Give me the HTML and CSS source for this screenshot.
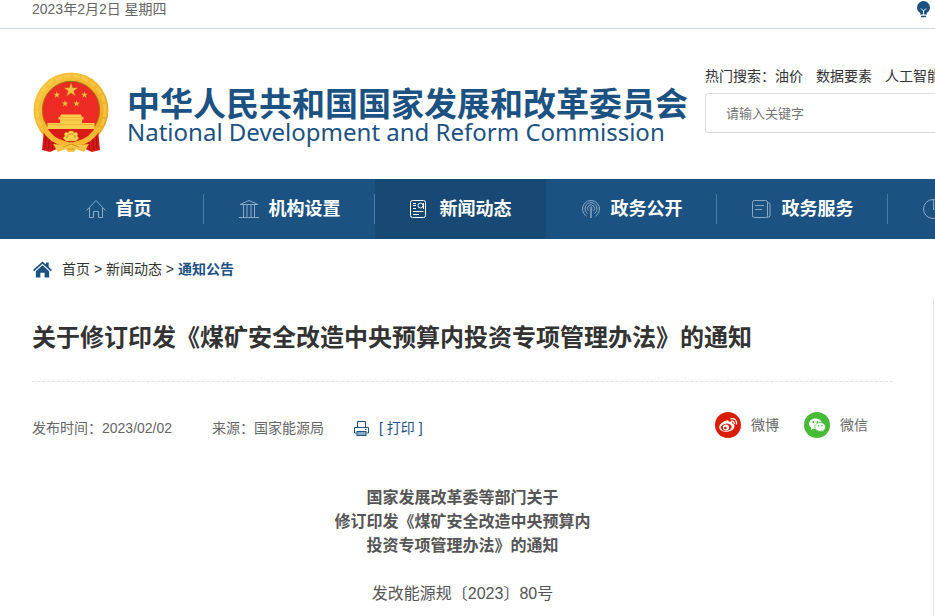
FILE: index.html
```html
<!DOCTYPE html>
<html lang="zh-CN">
<head>
  <meta charset="UTF-8">
  <meta name="viewport" content="width=device-width, initial-scale=1.0">
  <title>关于修订印发《煤矿安全改造中央预算内投资专项管理办法》的通知</title>
  <link rel="stylesheet" href="styles.css">
</head>
<body>
  <!-- Top bar -->
  <div class="topbar">
    <span>2023年2月2日 星期四</span>
    <a class="topbar-link" href="#" aria-label="智能问答">
      <svg width="13" height="17" viewBox="0 0 13 17">
        <path d="M6.500 0a6.500 6.500 0 0 0-6.500 6.500c0 2.500 1.300 4.300 3.300 5.500v2h6.400v-2c2-1.200 3.300-3 3.300-5.500a6.500 6.500 0 0 0-6.500-6.500z" fill="#1c5282"/>
        <path d="M4 7.500 6.500 10 9 7.500M6.500 10v4M3.500 14h6" fill="none" stroke="#fff"/>
        <path d="M4 15.500h5" stroke="#1c5282" stroke-width="1.500"/>
      </svg>
    </a>
  </div>

  <!-- Header -->
  <header class="header">
    <a class="brand" href="#">
      <svg class="emblem" width="76" height="82" viewBox="0 0 76 82">
        <defs>
          <linearGradient id="gold" x1="0" y1="0" x2="1" y2="1">
            <stop offset="0" stop-color="#f9c845"/>
            <stop offset="0.5" stop-color="#f2b52c"/>
            <stop offset="1" stop-color="#e9a41f"/>
          </linearGradient>
        </defs>
        <circle cx="38" cy="38" r="37.500" fill="url(#gold)"/>
        <circle cx="38" cy="38" r="34" fill="none" stroke="#fad052" stroke-width="3" stroke-dasharray="7 2" opacity=".6"/>
        <circle cx="38" cy="38" r="28.700" fill="#ed2a24" stroke="#a87412" stroke-width="1"/>
        <g fill="#f6c142" stroke="#a8620f" stroke-width="0.400">
          <path id="star" d="M38 10.500l1.700 5.200h5.500l-4.400 3.200 1.700 5.300-4.500-3.300-4.500 3.300 1.700-5.300-4.400-3.200h5.500z"/>
          <use href="#star" transform="translate(5.600 14.300) scale(.48)"/>
          <use href="#star" transform="translate(33.200 14.300) scale(.48)"/>
          <use href="#star" transform="translate(13.800 22.900) scale(.48)"/>
          <use href="#star" transform="translate(25.300 22.900) scale(.48)"/>
        </g>
        <path d="M28 42.500h20l1 2.500h1.500v2.500H49V51h12.500v6h-47v-6H27v-3.500h-1.500V45H27z" fill="#f9ce4c"/>
        <path d="M27 45.500h22M28 48h20M15 52.500h46" stroke="#eaa42a" stroke-width="0.600"/>
        <path d="M11 57h54l2 21-8 2-9-4H26l-9 4-8-2z" fill="#d91a17"/>
        <path d="M13 61l-1 16M17 64l-2 14M63 61l1 16M59 64l2 14M21 68l-2 10M55 68l2 10" stroke="#a90f11" stroke-width="1.200"/>
        <path d="M13 54q6 12 19 15l6 2 6-2q13-3 19-15l4 4q-7 13-22 16l-7-2-7 2Q16 71 9 58z" fill="#f4b931"/>
        <path d="M31 62l2-2 2 1 1-2h4l1 2 2-1 2 2-1 2 2 2-3 3H33l-3-3 2-2z" fill="#fbd24d" stroke="#c88718" stroke-width="0.500"/>
        <path d="M34 66a4 4 0 0 1 8 0" fill="none" stroke="#d9941d" stroke-width="1.200"/>
        <path d="M20 72l12 1 6-3 6 3 12-1-5 8-8-3-2 3h-6l-2-3-8 3z" fill="#f6c544"/>
        <path d="M30 75l8-3 8 3M34 77h8" fill="none" stroke="#d4901c" stroke-width="0.900"/>
      </svg>
      <span class="brand-text">
        <span class="brand-cn">中华人民共和国国家发展和改革委员会</span>
        <span class="brand-en">National Development and Reform Commission</span>
      </span>
    </a>
    <form class="search">
      <div class="hot">
        <label for="keyword">热门搜索：</label>
        <a href="#">油价</a>
        <a href="#">数据要素</a>
        <a href="#">人工智能</a>
      </div>
      <input type="text" id="keyword" placeholder="请输入关键字">
    </form>
  </header>

  <!-- Main navigation -->
  <nav class="nav">
    <a class="nav-item" href="#">
      <svg width="20" height="20" viewBox="0 0 20 20"><path d="M.5 11.500 10 1.500l9.500 10M3.500 9v9.500h4v-6h5v6h4V9"/></svg>
      首页
    </a>
    <a class="nav-item" href="#">
      <svg width="20" height="20" viewBox="0 0 20 20"><path d="M1 5.500 10 1.500l9 4zM0 18.500h20M4.500 6v12M8 6v12M12 6v12M15.500 6v12"/></svg>
      机构设置
    </a>
    <a class="nav-item active" href="#">
      <svg width="20" height="20" viewBox="0 0 20 20"><rect x=".5" y="1.500" width="15" height="17" rx="2"/><circle cx="10.500" cy="6.500" r="2.500"/><path d="M3 4.500h3M3 6.500h3M3 9.500h3M13.500 4v6M3 12.500h10.500M3 15.500h6"/></svg>
      新闻动态
    </a>
    <a class="nav-item" href="#">
      <svg width="20" height="20" viewBox="0 0 20 20"><path d="M5.500 17.200a8.500 8.500 0 1 1 9 0M6.500 14.500a6 6 0 1 1 7 0M7.500 11.800a3.500 3.500 0 1 1 5 0"/><circle cx="10" cy="9" r="1"/><path d="M10 10v9" stroke-width="1.500"/></svg>
      政务公开
    </a>
    <a class="nav-item" href="#">
      <svg width="20" height="20" viewBox="0 0 20 20"><rect x=".5" y="1.500" width="15" height="17" rx="2"/><path d="M3 6.500h9M3 10.500h7M15.500 3.500q2.500 0 2.500 2v11q0 2-3 2"/></svg>
      政务服务
    </a>
    <a class="nav-item" href="#">
      <svg width="20" height="20" viewBox="0 0 20 20"><circle cx="10" cy="10" r="9.500"/><path d="M10.500 1v9.500h8"/></svg>
      发改数据
    </a>
  </nav>

  <!-- Breadcrumb -->
  <div class="crumbs">
    <svg width="19" height="17" viewBox="0 0 20 17" fill="#1c5282">
      <path d="M10 0 0 9l1.300 1.300L10 2.500l8.700 7.800L20 9l-3.500-3.200V1h-3v2.200z"/>
      <path d="M10 4 3 10.300V17h4.800v-5h4.400v5H17v-6.700z"/>
    </svg>
    <span><a href="#">首页</a> &gt; <a href="#">新闻动态</a> &gt; <a class="current" href="#">通知公告</a></span>
  </div>

  <!-- Article -->
  <main class="main">
    <article class="article">
      <h1>关于修订印发《煤矿安全改造中央预算内投资专项管理办法》的通知</h1>
      <div class="meta">
        <span>发布时间：2023/02/02</span>
        <span class="source">来源：国家能源局</span>
        <button type="button" class="print">
          <svg width="15" height="15" viewBox="0 0 15 15">
            <path d="M3.500 6V.5h8V6M2.500 12H.5V6.500h14V12h-2" fill="none" stroke="#1c5282"/>
            <rect x="3" y="10.500" width="9" height="4" fill="#8da9c0" stroke="#1c5282"/>
            <path d="M11 8.500h1.500" stroke="#1c5282"/>
          </svg>
          [ 打印 ]
        </button>
        <div class="share">
          <a href="#">
            <svg width="26" height="26" viewBox="0 0 26 26">
              <circle cx="13" cy="13" r="13" fill="#d81e06"/>
              <path d="M11.500 8.500c1.500-.8 2.600-.3 2.200 1.500 2.300-.8 4-.4 3.500 1.400 1.500.5 2.300 1.400 2.300 2.600 0 3-3.500 5.800-8 5.800-4.300 0-7.300-2-7.300-4.600 0-2.500 3.500-5.700 7.300-6.700z" fill="#fff"/>
              <ellipse cx="11.300" cy="15.300" rx="5.400" ry="3.700" transform="rotate(-8 11.300 15.300)" fill="#d81e06"/>
              <circle cx="11" cy="15.500" r="3.100" fill="#fff"/>
              <circle cx="10.300" cy="16" r="1.300" fill="#d81e06"/>
              <path d="M16 6.800c3.500-.8 6.300 1.900 5.400 5.200M16.500 9.200c1.800-.3 3 .9 2.600 2.500" fill="none" stroke="#fff" stroke-width="1.300" stroke-linecap="round"/>
            </svg>
            微博
          </a>
          <a href="#">
            <svg width="26" height="26" viewBox="0 0 26 26">
              <circle cx="13" cy="13" r="13" fill="#45bb36"/>
              <path d="M11.500 6.500c-3.700 0-6.500 2.300-6.500 5.300 0 1.700.9 3.100 2.400 4.100l-.6 2 2.300-1.200 2.400.4c3.700 0 6.500-2.400 6.500-5.300s-2.800-5.300-6.500-5.300z" fill="#fff"/>
              <path d="M16.200 10.600c-3 0-5.400 1.900-5.400 4.400s2.400 4.400 5.400 4.400l1.900-.3 1.900 1-.5-1.700c1.300-.8 2-2 2-3.400 0-2.500-2.300-4.400-5.300-4.400z" fill="#fff" stroke="#45bb36" stroke-width="0.700"/>
              <g fill="#45bb36"><circle cx="9.300" cy="10" r=".9"/><circle cx="13.300" cy="10" r=".9"/><circle cx="14.500" cy="13.800" r=".8"/><circle cx="18" cy="13.800" r=".8"/></g>
            </svg>
            微信
          </a>
        </div>
      </div>
      <div class="content">
        <p><strong>国家发展改革委等部门关于<br>修订印发《煤矿安全改造中央预算内<br>投资专项管理办法》的通知</strong></p>
        <p>发改能源规〔2023〕80号</p>
      </div>
    </article>
    <aside class="sidebar"></aside>
  </main>
</body>
</html>
```
FILE: styles.css
```css
* {
  margin: 0;
  padding: 0;
  box-sizing: border-box;
}

body {
  font-family: "Liberation Sans", "Noto Sans CJK SC", sans-serif;
  font-size: 14px;
  line-height: 20px;
  color: #333;
  background: #fff;
  overflow: hidden auto;
  scrollbar-width: none;
}

a {
  color: inherit;
  text-decoration: none;
}

svg {
  flex: none;
}

/* Top bar */
.topbar {
  display: flex;
  justify-content: space-between;
  padding: 0 5px 9px 32px;
  line-height: 19px;
  color: #666;
  border-bottom: 1px solid #cfdce8;
}

.topbar-link {
  display: flex;
  padding-top: 1px;
}

/* Header */
.header {
  display: flex;
  height: 150px;
  padding-left: 33px;
}

.brand {
  display: flex;
  align-items: flex-start;
  gap: 18px;
  padding-top: 43px;
  color: #1c5282;
  white-space: nowrap;
}

.brand-text {
  display: flex;
  flex-direction: column;
  padding-top: 16px;
}

.brand-cn {
  font-size: 33px;
  line-height: 34px;
  font-weight: bold;
}

.brand-en {
  font-family: "Noto Sans", sans-serif;
  font-size: 24px;
  line-height: 20px;
}

.search {
  flex: 1;
  min-width: 230px;
  margin-left: 17px;
  padding-top: 37px;
}

.hot {
  display: flex;
  white-space: nowrap;
}

.hot a {
  margin-right: 13px;
}

.search input {
  width: 100%;
  height: 40px;
  margin-top: 7px;
  padding: 0 20px;
  border: 1px solid #ddd;
  border-right: none;
  border-radius: 4px 0 0 4px;
  font-family: inherit;
  font-size: 13px;
}

.search input::placeholder {
  color: #757575;
}

/* Navigation */
.nav {
  display: flex;
  height: 60px;
  padding-left: 33px;
  background: #1c5282;
  overflow: hidden;
}

.nav-item {
  flex: 0 0 171px;
  display: flex;
  justify-content: center;
  align-items: center;
  gap: 10px;
  font-size: 18px;
  font-weight: bold;
  color: #fff;
  white-space: nowrap;
  background: linear-gradient(#4d7aa2, #4d7aa2) right center / 1px 30px no-repeat;
}

.nav-item svg {
  fill: none;
  stroke: #8ba9c4;
}

.nav-item.active {
  background: #174974;
}

.nav-item.active svg {
  stroke: #fff;
}

/* Breadcrumb */
.crumbs {
  display: flex;
  align-items: center;
  gap: 10px;
  padding: 20px 33px;
}

.crumbs .current {
  font-weight: bold;
  color: #1c5282;
}

/* Article */
.main {
  display: flex;
  gap: 40px;
  padding-left: 32px;
}

.article {
  flex: 1;
}

.article h1 {
  padding: 21px 0 25px;
  font-size: 24px;
  line-height: 36px;
  border-bottom: 1px dashed #e5e5e5;
}

.meta {
  display: flex;
  align-items: flex-end;
  padding-top: 30px;
  color: #666;
}

.source {
  margin-left: 40px;
}

.print {
  display: flex;
  align-items: center;
  gap: 10px;
  margin-left: 30px;
  border: none;
  background: none;
  font: inherit;
  color: #1c5282;
  cursor: pointer;
}

.share {
  display: flex;
  gap: 25px;
  margin-left: auto;
  padding-right: 25px;
}

.share a {
  display: flex;
  align-items: center;
  gap: 10px;
}

.content {
  padding-top: 48px;
  font-size: 16px;
  line-height: 24px;
  text-align: center;
  color: #555;
}

.content p {
  padding-bottom: 24px;
}

.sidebar {
  flex: 0 0 2px;
  border-top: 1px solid #e5e5e5;
  border-left: 1px solid #e5e5e5;
}
```
